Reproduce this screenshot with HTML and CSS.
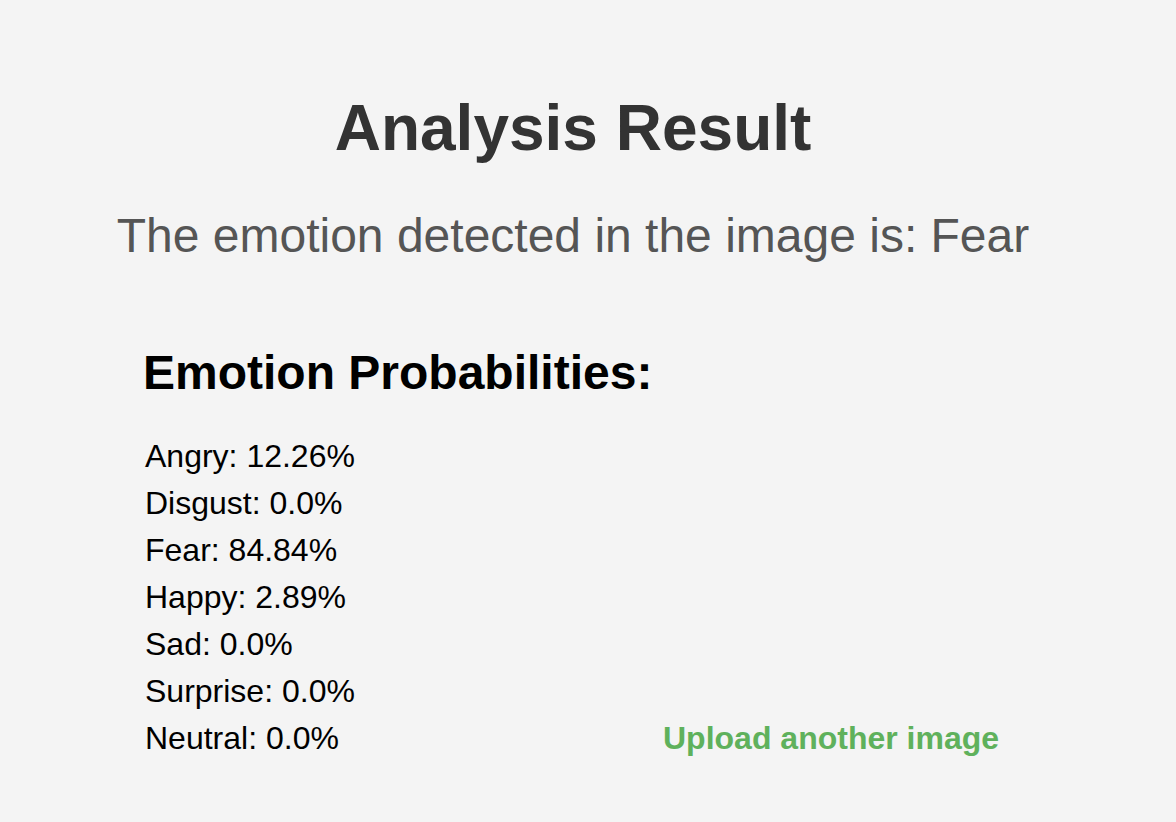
FILE: index.html
```html
<!DOCTYPE html>
<html lang="en">
<head>
<meta charset="utf-8">
<title>Analysis Result</title>
<link rel="stylesheet" href="styles.css">
</head>
<body>
<main class="page">
  <h1 class="title">Analysis Result</h1>
  <p class="subtitle">The emotion detected in the image is: Fear</p>
  <section class="results">
    <div class="probs">
      <h2 class="probs-title">Emotion Probabilities:</h2>
      <ul class="probs-list">
        <li>Angry: 12.26%</li>
        <li>Disgust: 0.0%</li>
        <li>Fear: 84.84%</li>
        <li>Happy: 2.89%</li>
        <li>Sad: 0.0%</li>
        <li>Surprise: 0.0%</li>
        <li>Neutral: 0.0%</li>
      </ul>
    </div>
    <a class="upload-link" href="#">Upload another image</a>
  </section>
</main>
</body>
</html>
```

FILE: styles.css
```css
html, body {
  margin: 0;
  padding: 0;
  background: #f4f4f4;
}

body {
  font-family: "Liberation Sans", Arial, Helvetica, sans-serif;
  width: 1176px;
  height: 822px;
  overflow: hidden;
}

.page {
  width: 1146px;
  padding-top: 92px;
  box-sizing: border-box;
}

.title {
  margin: 0;
  text-align: center;
  font-size: 64px;
  line-height: 1.15;
  font-weight: bold;
  color: #333333;
}

.subtitle {
  margin: 42px 0 0;
  text-align: center;
  font-size: 48px;
  line-height: 1.15;
  color: #555555;
}

.results {
  display: flex;
  align-items: flex-end;
  margin-top: 82px;
  padding-left: 143px;
}

.probs {
  width: 520px;
}

.probs-title {
  margin: 0;
  font-size: 48px;
  line-height: 1.15;
  font-weight: bold;
  color: #000000;
}

.probs-list {
  list-style: none;
  margin: 38px 0 0;
  padding: 0 0 0 2px;
}

.probs-list li {
  font-size: 32px;
  line-height: 37px;
  color: #000000;
  margin-top: 10px;
}

.probs-list li:first-child {
  margin-top: 0;
}

.upload-link {
  font-size: 32px;
  line-height: 37px;
  font-weight: bold;
  color: #5fb15c;
  text-decoration: none;
}
```
